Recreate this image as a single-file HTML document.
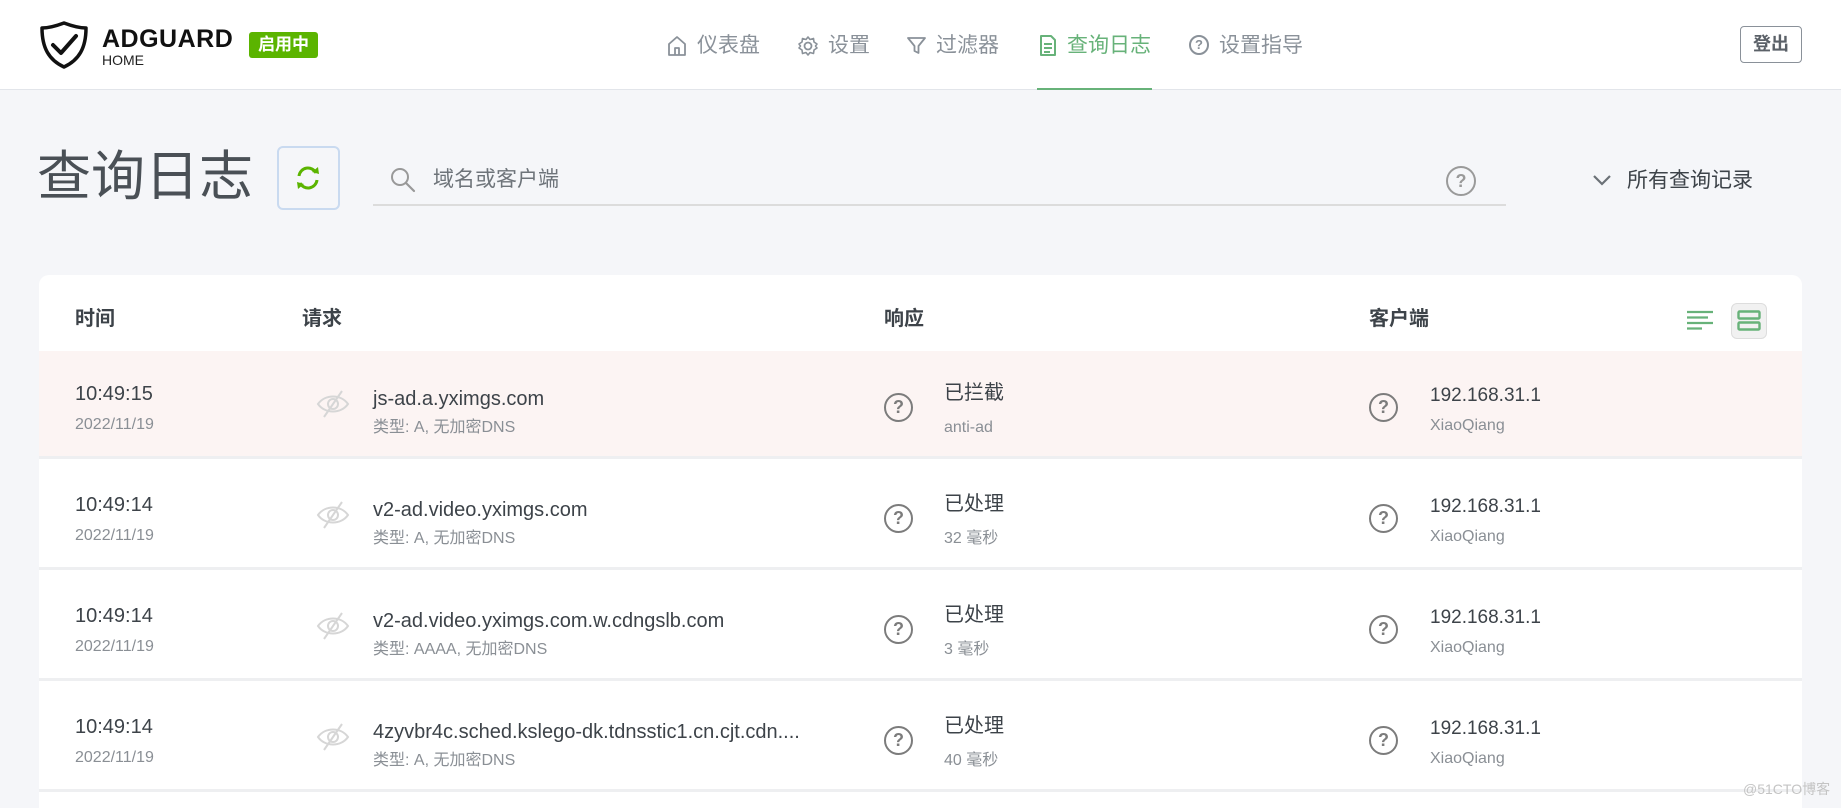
<!DOCTYPE html>
<html><head><meta charset="utf-8">
<style>
*{margin:0;padding:0;box-sizing:border-box}
html,body{overflow:hidden}
body{width:1841px;height:808px;overflow:hidden;background:#f5f6f9;font-family:"Liberation Sans","Noto Sans CJK SC",sans-serif;color:#495057;position:relative}
.a{position:absolute;white-space:nowrap}
.hdr{position:absolute;left:0;top:0;width:1841px;height:90px;background:#fff;border-bottom:1px solid #e2e5ea}
.nav{font-size:21px;color:#8a9199;line-height:24px}
.card{position:absolute;left:39px;top:275px;width:1763px;height:533px;background:#fff;border-radius:10px 10px 0 0;overflow:hidden}
.th{font-size:20px;font-weight:bold;color:#3d4349;line-height:24px}
.row{position:absolute;left:0;width:1763px;height:108px;border-bottom:3px solid #eeeff1}
.big{font-size:20px;color:#3d4349;line-height:24px}
.sm{font-size:16px;color:#8a8f95;line-height:20px}
.q{position:absolute;width:29px;height:29px;border:2px solid #7c7c7c;border-radius:50%;font-size:18px;font-weight:bold;color:#7c7c7c;text-align:center;line-height:25px}
</style></head><body>
<div class="hdr"></div>
<svg class="a" style="left:39px;top:20px" width="50" height="50" viewBox="0 0 50 50"><path d="M25 3 C17 6 10 8 3 8 C3 28 10 40 25 47 C40 40 47 28 47 8 C40 8 33 6 25 3Z" fill="none" stroke="#111" stroke-width="3.5" stroke-linejoin="round"/><path d="M14 25 L22 33 L37 16" fill="none" stroke="#111" stroke-width="4" stroke-linecap="round" stroke-linejoin="round"/></svg>
<div class="a" style="left:102px;top:25px;font-size:25px;font-weight:bold;color:#111;letter-spacing:0.5px;line-height:28px">ADGUARD</div>
<div class="a" style="left:102px;top:52px;font-size:14px;color:#222;line-height:16px">HOME</div>
<div class="a" style="left:249px;top:32px;width:69px;height:26px;background:#5bb400;border-radius:3px;color:#fff;font-size:17px;font-weight:bold;text-align:center;line-height:26px">启用中</div>
<svg class="a" style="left:667px;top:35px" width="20" height="22" viewBox="0 0 20 22"><path d="M2 9 L10 2 L18 9 V20 H2Z M8 20 V13 H12 V20" fill="none" stroke="#8a9199" stroke-width="1.8" stroke-linejoin="round"/></svg>
<div class="a nav" style="left:697px;top:34px">仪表盘</div>
<svg class="a" style="left:797px;top:35px" width="22" height="22" viewBox="0 0 22 22"><circle cx="11" cy="11" r="3.5" fill="none" stroke="#8a9199" stroke-width="1.8"/><path d="M11 2 L13 4.5 L16.5 3.5 L17 7 L20 9 L18.5 11 L20 13 L17 15 L16.5 18.5 L13 17.5 L11 20 L9 17.5 L5.5 18.5 L5 15 L2 13 L3.5 11 L2 9 L5 7 L5.5 3.5 L9 4.5Z" fill="none" stroke="#8a9199" stroke-width="1.6" stroke-linejoin="round"/></svg>
<div class="a nav" style="left:828px;top:34px">设置</div>
<svg class="a" style="left:906px;top:35px" width="21" height="21" viewBox="0 0 21 21"><path d="M2 3 H19 L12.5 11 V18 L8.5 16 V11Z" fill="none" stroke="#8a9199" stroke-width="1.8" stroke-linejoin="round"/></svg>
<div class="a nav" style="left:936px;top:34px">过滤器</div>
<svg class="a" style="left:1039px;top:34px" width="18" height="23" viewBox="0 0 18 23"><path d="M2 2 H12 L16 6 V21 H2Z" fill="none" stroke="#67b279" stroke-width="2" stroke-linejoin="round"/><path d="M5 10 H13 M5 14 H13 M5 18 H11" stroke="#67b279" stroke-width="2"/></svg>
<div class="a nav" style="left:1067px;top:34px;color:#67b279">查询日志</div>
<div class="a" style="left:1037px;top:88px;width:115px;height:2px;background:#67b279"></div>
<div class="a" style="left:1189px;top:35px;width:20px;height:20px;border:2px solid #8a9199;border-radius:50%;font-size:13px;font-weight:bold;color:#8a9199;text-align:center;line-height:16px">?</div>
<div class="a nav" style="left:1219px;top:34px">设置指导</div>
<div class="a" style="left:1740px;top:26px;width:62px;height:37px;border:1px solid #8a9199;border-radius:4px;font-size:18px;font-weight:bold;color:#5b6168;text-align:center;line-height:35px">登出</div>

<div class="a" style="left:37px;top:146px;font-size:54px;color:#4a5056;line-height:62px">查询日志</div>
<div class="a" style="left:277px;top:146px;width:63px;height:64px;border:2px solid #c9daf0;border-radius:6px"></div>
<svg class="a" style="left:292px;top:162px" width="32" height="32" viewBox="0 0 32 32"><path d="M7 14 A9 9 0 0 1 24 11" fill="none" stroke="#5bb400" stroke-width="3"/><path d="M20 10 L27 12 L26 5" fill="#5bb400"/><path d="M25 18 A9 9 0 0 1 8 21" fill="none" stroke="#5bb400" stroke-width="3"/><path d="M12 22 L5 20 L6 27" fill="#5bb400"/></svg>
<div class="a" style="left:373px;top:204px;width:1133px;height:2px;background:#dcdcdc"></div>
<svg class="a" style="left:389px;top:166px" width="28" height="28" viewBox="0 0 28 28"><circle cx="11" cy="11" r="8" fill="none" stroke="#999" stroke-width="2"/><path d="M17 17 L25 25" stroke="#999" stroke-width="2.2" stroke-linecap="round"/></svg>
<div class="a" style="left:433px;top:167px;font-size:21px;color:#6e747a;line-height:26px">域名或客户端</div>
<div class="a" style="left:1446px;top:166px;width:30px;height:30px;border:2px solid #9a9a9a;border-radius:50%;font-size:18px;font-weight:bold;color:#9a9a9a;text-align:center;line-height:26px">?</div>
<svg class="a" style="left:1592px;top:173px" width="20" height="14" viewBox="0 0 20 14"><path d="M2 3 L10 11 L18 3" fill="none" stroke="#6b7177" stroke-width="2.2"/></svg>
<div class="a" style="left:1627px;top:168px;font-size:21px;color:#3d4349;line-height:26px">所有查询记录</div>

<div class="card">
<div class="a th" style="left:36px;top:32px">时间</div>
<div class="a th" style="left:263px;top:32px">请求</div>
<div class="a th" style="left:845px;top:32px">响应</div>
<div class="a th" style="left:1330px;top:32px">客户端</div>
<svg class="a" style="left:1648px;top:35px" width="27" height="20" viewBox="0 0 27 20"><path d="M0 2 H26 M0 7.5 H21 M0 13 H26 M0 18.5 H15" stroke="#67b279" stroke-width="2.2"/></svg>
<div class="a" style="left:1692px;top:28px;width:36px;height:36px;background:#f1f1f1;border:1px solid #ddd;border-radius:6px"></div>
<svg class="a" style="left:1698px;top:35px" width="24" height="22" viewBox="0 0 24 22"><rect x="1.5" y="1.5" width="21" height="7" rx="1" fill="none" stroke="#67b279" stroke-width="2.4"/><rect x="1.5" y="12.5" width="21" height="7" rx="1" fill="none" stroke="#67b279" stroke-width="2.4"/></svg>

<div class="row" style="top:76px;background:#fcf4f3">
<div class="a big" style="left:36px;top:31px">10:49:15</div><div class="a sm" style="left:36px;top:64px">2022/11/19</div>
<svg class="a" style="left:276px;top:38px" width="36" height="30" viewBox="0 0 36 30"><path d="M3 15 C10 5 26 5 33 15 C26 25 10 25 3 15Z" fill="none" stroke="#d6d6d6" stroke-width="2"/><circle cx="18" cy="15" r="5" fill="none" stroke="#d6d6d6" stroke-width="2"/><path d="M27 2 L9 28" stroke="#d6d6d6" stroke-width="2"/></svg>
<div class="a big" style="left:334px;top:36px">js-ad.a.yximgs.com</div><div class="a sm" style="left:334px;top:67px">类型: A, 无加密DNS</div>
<div class="q" style="left:845px;top:42px">?</div>
<div class="a big" style="left:905px;top:30px">已拦截</div><div class="a sm" style="left:905px;top:67px">anti-ad</div>
<div class="q" style="left:1330px;top:42px">?</div>
<div class="a big" style="left:1391px;top:33px;font-size:19px">192.168.31.1</div><div class="a sm" style="left:1391px;top:65px">XiaoQiang</div>
</div>

<div class="row" style="top:187px">
<div class="a big" style="left:36px;top:31px">10:49:14</div><div class="a sm" style="left:36px;top:64px">2022/11/19</div>
<svg class="a" style="left:276px;top:38px" width="36" height="30" viewBox="0 0 36 30"><path d="M3 15 C10 5 26 5 33 15 C26 25 10 25 3 15Z" fill="none" stroke="#d6d6d6" stroke-width="2"/><circle cx="18" cy="15" r="5" fill="none" stroke="#d6d6d6" stroke-width="2"/><path d="M27 2 L9 28" stroke="#d6d6d6" stroke-width="2"/></svg>
<div class="a big" style="left:334px;top:36px">v2-ad.video.yximgs.com</div><div class="a sm" style="left:334px;top:67px">类型: A, 无加密DNS</div>
<div class="q" style="left:845px;top:42px">?</div>
<div class="a big" style="left:905px;top:30px">已处理</div><div class="a sm" style="left:905px;top:67px">32 毫秒</div>
<div class="q" style="left:1330px;top:42px">?</div>
<div class="a big" style="left:1391px;top:33px;font-size:19px">192.168.31.1</div><div class="a sm" style="left:1391px;top:65px">XiaoQiang</div>
</div>

<div class="row" style="top:298px">
<div class="a big" style="left:36px;top:31px">10:49:14</div><div class="a sm" style="left:36px;top:64px">2022/11/19</div>
<svg class="a" style="left:276px;top:38px" width="36" height="30" viewBox="0 0 36 30"><path d="M3 15 C10 5 26 5 33 15 C26 25 10 25 3 15Z" fill="none" stroke="#d6d6d6" stroke-width="2"/><circle cx="18" cy="15" r="5" fill="none" stroke="#d6d6d6" stroke-width="2"/><path d="M27 2 L9 28" stroke="#d6d6d6" stroke-width="2"/></svg>
<div class="a big" style="left:334px;top:36px">v2-ad.video.yximgs.com.w.cdngslb.com</div><div class="a sm" style="left:334px;top:67px">类型: AAAA, 无加密DNS</div>
<div class="q" style="left:845px;top:42px">?</div>
<div class="a big" style="left:905px;top:30px">已处理</div><div class="a sm" style="left:905px;top:67px">3 毫秒</div>
<div class="q" style="left:1330px;top:42px">?</div>
<div class="a big" style="left:1391px;top:33px;font-size:19px">192.168.31.1</div><div class="a sm" style="left:1391px;top:65px">XiaoQiang</div>
</div>

<div class="row" style="top:409px">
<div class="a big" style="left:36px;top:31px">10:49:14</div><div class="a sm" style="left:36px;top:64px">2022/11/19</div>
<svg class="a" style="left:276px;top:38px" width="36" height="30" viewBox="0 0 36 30"><path d="M3 15 C10 5 26 5 33 15 C26 25 10 25 3 15Z" fill="none" stroke="#d6d6d6" stroke-width="2"/><circle cx="18" cy="15" r="5" fill="none" stroke="#d6d6d6" stroke-width="2"/><path d="M27 2 L9 28" stroke="#d6d6d6" stroke-width="2"/></svg>
<div class="a big" style="left:334px;top:36px">4zyvbr4c.sched.kslego-dk.tdnsstic1.cn.cjt.cdn....</div><div class="a sm" style="left:334px;top:67px">类型: A, 无加密DNS</div>
<div class="q" style="left:845px;top:42px">?</div>
<div class="a big" style="left:905px;top:30px">已处理</div><div class="a sm" style="left:905px;top:67px">40 毫秒</div>
<div class="q" style="left:1330px;top:42px">?</div>
<div class="a big" style="left:1391px;top:33px;font-size:19px">192.168.31.1</div><div class="a sm" style="left:1391px;top:65px">XiaoQiang</div>
</div>
</div>
<div class="a" style="left:1743px;top:780px;font-size:14px;color:#c4c4c4;line-height:18px">@51CTO博客</div>
</body></html>
